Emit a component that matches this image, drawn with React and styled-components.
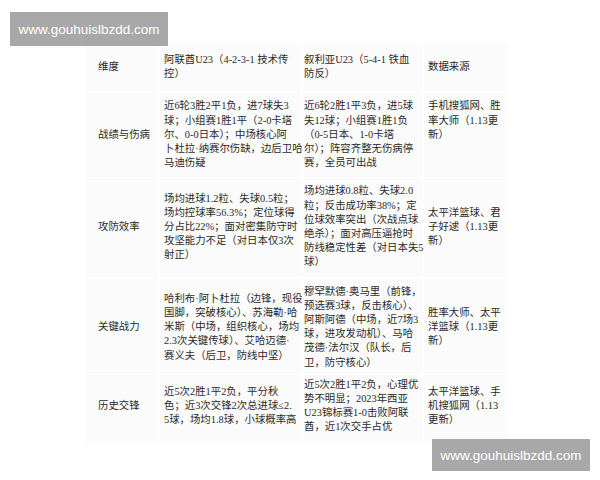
import React from 'react'
import styled, { createGlobalStyle } from 'styled-components'

const GlobalStyle = createGlobalStyle`
  body {
    margin: 0;
    background: #fff;
  }
`

const columns = [
  { width: 72, pad: 12 },
  { width: 142, pad: 5 },
  { width: 121, pad: 2 },
  { width: 84, pad: 4 },
]

const header = [
  ['维度'],
  ['阿联酋U23（4-2-3-1 技术传', '控）'],
  ['叙利亚U23（5-4-1 铁血', '防反）'],
  ['数据来源'],
]

const rows = [
  {
    label: '战绩与伤病',
    sourceTop: true,
    pad: '7px 0 7px',
    uae: [
      '近6轮3胜2平1负，进7球失3',
      '球；小组赛1胜1平（2-0卡塔',
      '尔、0-0日本）；中场核心阿',
      '卜杜拉·纳赛尔伤缺，边后卫哈',
      '马迪伤疑',
    ],
    syria: [
      '近6轮2胜1平3负，进5球',
      '失12球；小组赛1胜1负',
      '（0-5日本、1-0卡塔',
      '尔）；阵容齐整无伤病停',
      '赛，全员可出战',
    ],
    source: ['手机搜狐网、胜', '率大师（1.13更', '新）'],
  },
  {
    label: '攻防效率',
    pad: '6px 0 7px',
    uae: [
      '场均进球1.2粒、失球0.5粒；',
      '场均控球率56.3%；定位球得',
      '分占比22%；面对密集防守时',
      '攻坚能力不足（对日本仅3次',
      '射正）',
    ],
    syria: [
      '场均进球0.8粒、失球2.0',
      '粒；反击成功率38%；定',
      '位球效率突出（次战点球',
      '绝杀）；面对高压逼抢时',
      '防线稳定性差（对日本失5',
      '球）',
    ],
    source: ['太平洋篮球、君', '子好逑（1.13更', '新）'],
  },
  {
    label: '关键战力',
    pad: '7px 0 4px',
    uae: [
      '哈利布·阿卜杜拉（边锋，现役',
      '国脚，突破核心）、苏海勒·哈',
      '米斯（中场，组织核心，场均',
      '2.3次关键传球）、艾哈迈德·',
      '赛义夫（后卫，防线中坚）',
    ],
    syria: [
      '穆罕默德·奥马里（前锋，',
      '预选赛3球，反击核心）、',
      '阿斯阿德（中场，近7场3',
      '球，进攻发动机）、马哈',
      '茂德·法尔汉（队长，后',
      '卫，防守核心）',
    ],
    source: ['胜率大师、太平', '洋篮球（1.13更', '新）'],
  },
  {
    label: '历史交锋',
    pad: '3px 0 8px',
    uae: [
      '近5次2胜1平2负，平分秋',
      '色；近3次交锋2次总进球≤2.',
      '5球，场均1.8球，小球概率高',
    ],
    syria: [
      '近5次2胜1平2负，心理优',
      '势不明显；2023年西亚',
      'U23锦标赛1-0击败阿联',
      '酋，近1次交手占优',
    ],
    source: ['太平洋篮球、手', '机搜狐网（1.13', '更新）'],
  },
]

const App = () => {
  return (
    <>
      <GlobalStyle />
      <Page>
        <Watermark $top>www.gouhuislbzdd.com</Watermark>
        <Table>
          <Row>
            {header.map((lines, i) => (
              <Cell key={i} $col={i} $pad='10px 0'>
                {lines.map((l) => (
                  <Line key={l}>{l}</Line>
                ))}
              </Cell>
            ))}
          </Row>
          {rows.map((r) => {
            const cells = [[r.label], r.uae, r.syria, r.source]
            return (
              <Row key={r.label}>
                {cells.map((lines, i) => (
                  <Cell
                    key={i}
                    $col={i}
                    $pad={r.pad}
                    $top={i === 3 && r.sourceTop}
                  >
                    {lines.map((l) => (
                      <Line key={l}>{l}</Line>
                    ))}
                  </Cell>
                ))}
              </Row>
            )
          })}
        </Table>
        <Watermark>www.gouhuislbzdd.com</Watermark>
      </Page>
    </>
  )
}

const Page = styled.div`
  position: relative;
  width: 600px;
  height: 480px;
  overflow: hidden;
  padding: 43px 0 0 86px;
  box-sizing: border-box;
  font-family: 'Liberation Serif', 'Noto Sans CJK SC', serif;
  font-size: 10.4px;
  color: #2a2a2a;
`

const Table = styled.div`
  display: flex;
  flex-direction: column;
  width: 419px;
  gap: 1px;
  background: #fff;
`

const Row = styled.div`
  display: grid;
  grid-template-columns: ${columns.map((c) => c.width + 'px').join(' ')};
  gap: 1px;
`

const Cell = styled.div`
  display: flex;
  flex-direction: column;
  justify-content: ${(p) => (p.$top ? 'flex-start' : 'center')};
  padding: ${(p) => p.$pad};
  padding-left: ${(p) => columns[p.$col].pad}px;
  background: #fbfbfb;
  line-height: 14.2px;
`

const Line = styled.span`
  display: block;
  white-space: nowrap;
`

const Watermark = styled.div`
  position: absolute;
  ${(p) =>
    p.$top
      ? 'left: 10px; top: 12px; height: 34px;'
      : 'left: 432px; top: 439px; height: 32px;'}
  width: 158px;
  display: flex;
  align-items: center;
  justify-content: center;
  background: #a8a8a8;
  color: #fff;
  font-family: 'Liberation Sans', Arial, sans-serif;
  font-size: 13.5px;
`

export default App
